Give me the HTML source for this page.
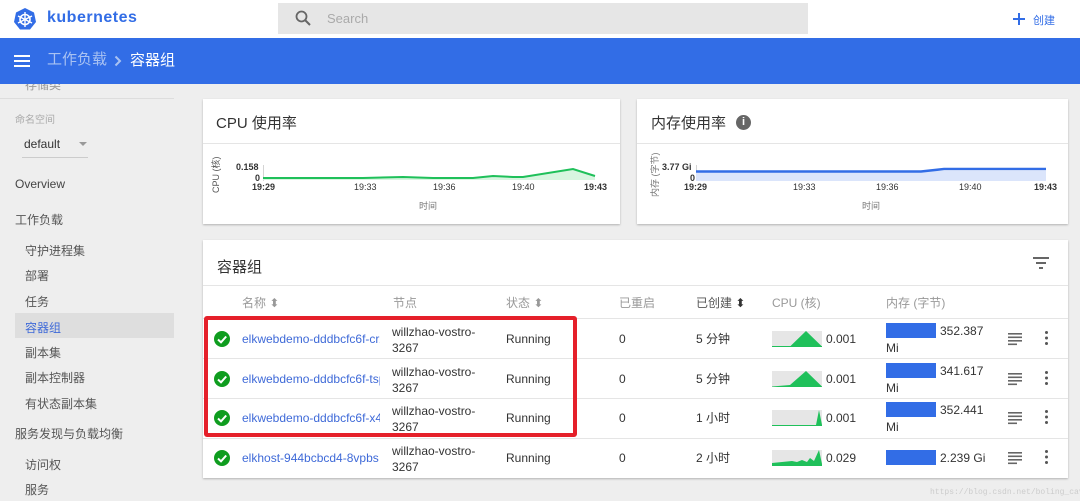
<!DOCTYPE html>
<html><head><meta charset="utf-8"><style>
*{margin:0;padding:0;box-sizing:border-box}
body{width:1080px;height:501px;overflow:hidden;background:#eeeeee;font-family:"Liberation Sans","Noto Sans CJK SC",sans-serif;position:relative;color:#333}
.a{position:absolute;white-space:nowrap}
.card{position:absolute;background:#fff;box-shadow:0 1px 2px rgba(0,0,0,.25)}
.side{font-size:12px;color:#555}
.th{font-size:12px;color:#999;line-height:14px}
.td{font-size:12px;color:#333;line-height:14px}
.lnk{color:#3f6ad8;font-size:12px;overflow:hidden;width:138px;line-height:14px}
</style></head><body>
<div class="a side" style="left:25px;top:78px;color:#999;line-height:14px">存储类</div>
<div class="a" style="left:0;top:0;width:1080px;height:38px;background:#fff"></div>
<svg class="a" style="left:13px;top:7px" width="24" height="24" viewBox="0 0 24 24"><polygon points="12,1 21,5.5 23,15 17,22.5 7,22.5 1,15 3,5.5" fill="#326de6"/><circle cx="12" cy="12.5" r="5" fill="none" stroke="#fff" stroke-width="1.6"/><g stroke="#fff" stroke-width="1.4"><line x1="12" y1="5" x2="12" y2="20"/><line x1="5" y1="9" x2="19" y2="16"/><line x1="19" y1="9" x2="5" y2="16"/></g></svg>
<div class="a" style="left:47px;top:9px;font-size:16px;font-weight:bold;color:#326de6;letter-spacing:.5px">kubernetes</div>
<div class="a" style="left:278px;top:3px;width:530px;height:31px;background:#e6e6e6"></div>
<svg class="a" style="left:295px;top:10px" width="16" height="16" viewBox="0 0 16 16"><circle cx="6.5" cy="6.5" r="5" fill="none" stroke="#666" stroke-width="1.8"/><line x1="10" y1="10" x2="15" y2="15" stroke="#666" stroke-width="2"/></svg>
<div class="a" style="left:327px;top:11px;font-size:13px;color:#aaa">Search</div>
<svg class="a" style="left:1013px;top:13px" width="12" height="12"><rect x="5" y="0" width="2" height="12" fill="#326de6"/><rect x="0" y="5" width="12" height="2" fill="#326de6"/></svg>
<div class="a" style="left:1033px;top:12px;font-size:11px;color:#326de6">创建</div>
<div class="a" style="left:0;top:38px;width:1080px;height:46px;background:#326de6"></div>
<svg class="a" style="left:14px;top:55px" width="16" height="12"><rect y="0" width="16" height="2" fill="#fff"/><rect y="5" width="16" height="2" fill="#fff"/><rect y="10" width="16" height="2" fill="#fff"/></svg>
<div class="a" style="left:47px;top:51px;font-size:15px;color:#a9c2f2;line-height:18px">工作负载</div>
<svg class="a" style="left:114px;top:55px" width="8" height="12"><polyline points="1.5,1.5 6,6 1.5,10.5" fill="none" stroke="#a9c2f2" stroke-width="2"/></svg>
<div class="a" style="left:130px;top:52px;font-size:15px;color:#fff;line-height:18px">容器组</div>
<div class="a" style="left:0;top:98px;width:174px;height:1px;background:#ddd"></div>
<div class="a side" style="left:15px;top:111px;font-size:10px;color:#aaa">命名空间</div>
<div class="a side" style="left:24px;top:137px;color:#333">default</div>
<div class="a" style="left:79px;top:142px;border:4px solid transparent;border-top-color:#999"></div>
<div class="a" style="left:22px;top:157px;width:66px;height:1px;background:#ccc"></div>
<div class="a side" style="left:15px;top:177px;color:#444">Overview</div>
<div class="a side" style="left:15px;top:211px">工作负载</div>
<div class="a side" style="left:25px;top:242px">守护进程集</div>
<div class="a side" style="left:25px;top:267px">部署</div>
<div class="a side" style="left:25px;top:293px">任务</div>
<div class="a" style="left:15px;top:313px;width:159px;height:25px;background:#dedede"></div>
<div class="a side" style="left:25px;top:319px;color:#3f6ad8">容器组</div>
<div class="a side" style="left:25px;top:344px">副本集</div>
<div class="a side" style="left:25px;top:369px">副本控制器</div>
<div class="a side" style="left:25px;top:395px">有状态副本集</div>
<div class="a side" style="left:15px;top:425px">服务发现与负载均衡</div>
<div class="a side" style="left:25px;top:456px">访问权</div>
<div class="a side" style="left:25px;top:481px">服务</div>

<div class="card" style="left:203px;top:99px;width:417px;height:125px"></div>
<div class="a" style="left:216px;top:112px;font-size:15px;color:#333">CPU 使用率</div>
<div class="a" style="left:203px;top:143px;width:417px;height:1px;background:#e5e5e5"></div>
<div class="a" style="left:209px;top:193px;font-size:9px;color:#555;transform:rotate(-90deg);transform-origin:0 0">CPU (核)</div>
<div class="a" style="left:236px;top:162px;font-size:9px;font-weight:bold">0.158</div>
<div class="a" style="left:255px;top:173px;font-size:9px;font-weight:bold">0</div>
<svg class="a" style="left:263px;top:165px" width="340" height="16"><line x1="0" y1="0" x2="0" y2="16" stroke="#aaa"/><polygon points="0,13 100,13 140,12 170,13 210,13 230,11 250,12 260,12 310,4 332,11 332,15 0,15" fill="#d8f5e0"/><polyline points="0,13 100,13 140,12 170,13 210,13 230,11 250,12 260,12 310,4 332,11" fill="none" stroke="#1fc05a" stroke-width="2"/></svg>
<div class="a" style="left:252px;top:182px;font-size:9px;font-weight:bold">19:29</div>
<div class="a" style="left:354px;top:182px;font-size:9px">19:33</div>
<div class="a" style="left:433px;top:182px;font-size:9px">19:36</div>
<div class="a" style="left:512px;top:182px;font-size:9px">19:40</div>
<div class="a" style="left:584px;top:182px;font-size:9px;font-weight:bold">19:43</div>
<div class="a" style="left:419px;top:199px;font-size:9px;color:#777">时间</div>

<div class="card" style="left:637px;top:99px;width:431px;height:125px"></div>
<div class="a" style="left:651px;top:112px;font-size:15px;color:#333">内存使用率</div>
<div class="a" style="left:736px;top:115px;width:15px;height:15px;border-radius:50%;background:#666;color:#fff;font-size:11px;font-weight:bold;text-align:center;line-height:15px">i</div>
<div class="a" style="left:637px;top:143px;width:431px;height:1px;background:#e5e5e5"></div>
<div class="a" style="left:648px;top:197px;font-size:9px;color:#777;transform:rotate(-90deg);transform-origin:0 0">内存 (字节)</div>
<div class="a" style="left:662px;top:162px;font-size:9px;font-weight:bold">3.77 Gi</div>
<div class="a" style="left:690px;top:173px;font-size:9px;font-weight:bold">0</div>
<svg class="a" style="left:696px;top:165px" width="350" height="16"><line x1="0" y1="0" x2="0" y2="16" stroke="#aaa"/><rect x="0" y="6" width="350" height="10" fill="#dbe5fb"/><polyline points="0,6.5 225,6.5 248,4 350,4" fill="none" stroke="#326de6" stroke-width="2.5"/></svg>
<div class="a" style="left:684px;top:182px;font-size:9px;font-weight:bold">19:29</div>
<div class="a" style="left:793px;top:182px;font-size:9px">19:33</div>
<div class="a" style="left:876px;top:182px;font-size:9px">19:36</div>
<div class="a" style="left:959px;top:182px;font-size:9px">19:40</div>
<div class="a" style="left:1034px;top:182px;font-size:9px;font-weight:bold">19:43</div>
<div class="a" style="left:862px;top:199px;font-size:9px;color:#777">时间</div>

<div class="card" style="left:203px;top:240px;width:865px;height:238px"></div>
<div class="a" style="left:217px;top:256px;font-size:15px;color:#333">容器组</div>
<svg class="a" style="left:1033px;top:257px" width="16" height="12"><rect y="0" width="16" height="2" fill="#666"/><rect x="3" y="5" width="10" height="2" fill="#666"/><rect x="6" y="10" width="4" height="2" fill="#666"/></svg>
<div class="a" style="left:203px;top:285px;width:865px;height:1px;background:#e5e5e5"></div>
<div class="a th" style="left:242px;top:296px">名称 ⬍</div>
<div class="a th" style="left:393px;top:296px">节点</div>
<div class="a th" style="left:506px;top:296px">状态 ⬍</div>
<div class="a th" style="left:619px;top:296px">已重启</div>
<div class="a th" style="left:696px;top:296px;color:#555">已创建 <span style="color:#333">⬍</span></div>
<div class="a th" style="left:772px;top:296px">CPU (核)</div>
<div class="a th" style="left:886px;top:296px">内存 (字节)</div>

<div class="a" style="left:203px;top:318px;width:865px;height:1px;background:#e5e5e5"></div>
<div class="a" style="left:203px;top:358px;width:865px;height:1px;background:#e5e5e5"></div>
<div class="a" style="left:203px;top:398px;width:865px;height:1px;background:#e5e5e5"></div>
<div class="a" style="left:203px;top:438px;width:865px;height:1px;background:#e5e5e5"></div>

<svg width="0" height="0" style="position:absolute"><defs><g id="ck"><circle cx="8" cy="8" r="8" fill="#0f9d1f"/><polyline points="4,8.5 7,11.3 12.2,5.5" fill="none" stroke="#fff" stroke-width="2"/></g><g id="lg"><rect y="0" width="14" height="1.6" fill="#666"/><rect y="3.5" width="14" height="1.6" fill="#666"/><rect y="7" width="14" height="1.6" fill="#666"/><rect y="10.5" width="9" height="1.6" fill="#666"/></g></defs></svg>

<svg class="a" style="left:214px;top:331px" width="16" height="16"><use href="#ck"/></svg>
<div class="a lnk" style="left:242px;top:332px">elkwebdemo-dddbcfc6f-crz</div>
<div class="a td" style="left:392px;top:324px;line-height:16px">willzhao-vostro-<br>3267</div>
<div class="a td" style="left:506px;top:332px">Running</div>
<div class="a td" style="left:619px;top:332px">0</div>
<div class="a td" style="left:696px;top:332px">5 分钟</div>
<svg class="a" style="left:772px;top:331px" width="52" height="16"><rect width="50" height="16" fill="#e6e6e6"/><polygon points="0,15.5 18,15.5 34,0 50,15.5 50,16 0,16" fill="#1fc05a"/><line x1="0" y1="15.5" x2="50" y2="15.5" stroke="#1fc05a"/></svg>
<div class="a td" style="left:826px;top:332px">0.001</div>
<div class="a" style="left:886px;top:323px;width:50px;height:15px;background:#326de6"></div>
<div class="a td" style="left:940px;top:323px;line-height:16px">352.387</div>
<div class="a td" style="left:886px;top:341px">Mi</div>
<svg class="a" style="left:1008px;top:333px" width="14" height="13"><use href="#lg"/></svg>
<div class="a" style="left:1045px;top:331px;width:3px;height:3px;background:#555;border-radius:50%;box-shadow:0 5.5px 0 #555,0 11px 0 #555"></div>

<svg class="a" style="left:214px;top:371px" width="16" height="16"><use href="#ck"/></svg>
<div class="a lnk" style="left:242px;top:372px">elkwebdemo-dddbcfc6f-tsp</div>
<div class="a td" style="left:392px;top:364px;line-height:16px">willzhao-vostro-<br>3267</div>
<div class="a td" style="left:506px;top:372px">Running</div>
<div class="a td" style="left:619px;top:372px">0</div>
<div class="a td" style="left:696px;top:372px">5 分钟</div>
<svg class="a" style="left:772px;top:371px" width="52" height="16"><rect width="50" height="16" fill="#e6e6e6"/><polygon points="0,15.5 18,14 34,0 50,15.5 50,16 0,16" fill="#1fc05a"/></svg>
<div class="a td" style="left:826px;top:372px">0.001</div>
<div class="a" style="left:886px;top:363px;width:50px;height:15px;background:#326de6"></div>
<div class="a td" style="left:940px;top:363px;line-height:16px">341.617</div>
<div class="a td" style="left:886px;top:381px">Mi</div>
<svg class="a" style="left:1008px;top:373px" width="14" height="13"><use href="#lg"/></svg>
<div class="a" style="left:1045px;top:371px;width:3px;height:3px;background:#555;border-radius:50%;box-shadow:0 5.5px 0 #555,0 11px 0 #555"></div>

<svg class="a" style="left:214px;top:410px" width="16" height="16"><use href="#ck"/></svg>
<div class="a lnk" style="left:242px;top:411px">elkwebdemo-dddbcfc6f-x4l</div>
<div class="a td" style="left:392px;top:403px;line-height:16px">willzhao-vostro-<br>3267</div>
<div class="a td" style="left:506px;top:411px">Running</div>
<div class="a td" style="left:619px;top:411px">0</div>
<div class="a td" style="left:696px;top:411px">1 小时</div>
<svg class="a" style="left:772px;top:410px" width="52" height="16"><rect width="50" height="16" fill="#e6e6e6"/><polygon points="0,15 44,15 47,0 50,15 50,16 0,16" fill="#1fc05a"/></svg>
<div class="a td" style="left:826px;top:411px">0.001</div>
<div class="a" style="left:886px;top:402px;width:50px;height:15px;background:#326de6"></div>
<div class="a td" style="left:940px;top:402px;line-height:16px">352.441</div>
<div class="a td" style="left:886px;top:420px">Mi</div>
<svg class="a" style="left:1008px;top:412px" width="14" height="13"><use href="#lg"/></svg>
<div class="a" style="left:1045px;top:410px;width:3px;height:3px;background:#555;border-radius:50%;box-shadow:0 5.5px 0 #555,0 11px 0 #555"></div>

<svg class="a" style="left:214px;top:450px" width="16" height="16"><use href="#ck"/></svg>
<div class="a lnk" style="left:242px;top:451px">elkhost-944bcbcd4-8vpbs</div>
<div class="a td" style="left:392px;top:443px;line-height:16px">willzhao-vostro-<br>3267</div>
<div class="a td" style="left:506px;top:451px">Running</div>
<div class="a td" style="left:619px;top:451px">0</div>
<div class="a td" style="left:696px;top:451px">2 小时</div>
<svg class="a" style="left:772px;top:450px" width="52" height="16"><rect width="50" height="16" fill="#e6e6e6"/><polygon points="0,13 10,12 20,11 25,12 30,10 35,12 38,8 42,11 47,0 50,14 50,16 0,16" fill="#1fc05a"/></svg>
<div class="a td" style="left:826px;top:451px">0.029</div>
<div class="a" style="left:886px;top:450px;width:50px;height:15px;background:#326de6"></div>
<div class="a td" style="left:940px;top:451px">2.239 Gi</div>
<svg class="a" style="left:1008px;top:452px" width="14" height="13"><use href="#lg"/></svg>
<div class="a" style="left:1045px;top:450px;width:3px;height:3px;background:#555;border-radius:50%;box-shadow:0 5.5px 0 #555,0 11px 0 #555"></div>

<div class="a" style="left:204px;top:316px;width:373px;height:121px;border:4px solid #e5202a;border-radius:3px"></div>
<div class="a" style="left:930px;top:488px;font-size:8px;color:#ccc;font-family:'Liberation Mono',monospace">https://blog.csdn.net/boling_cavalry</div>
</body></html>
